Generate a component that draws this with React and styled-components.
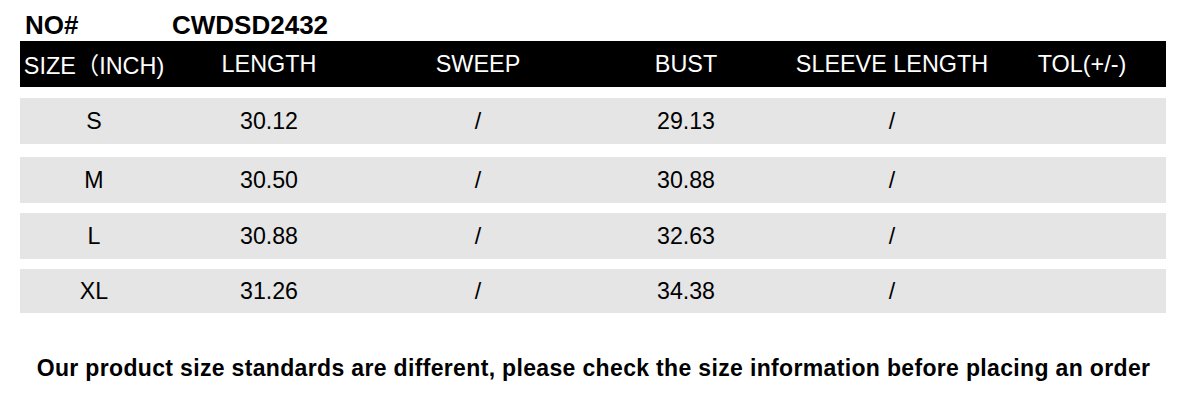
import React from "react";
import styled, { createGlobalStyle } from "styled-components";

const Global = createGlobalStyle`
  html, body { margin: 0; padding: 0; background: #ffffff; }
  body { font-family: "Liberation Sans", Arial, "Noto Sans CJK SC", sans-serif; color: #000; }
`;

const Page = styled.div`
  width: 1192px;
  height: 400px;
  padding: 10px 0 0 20px;
  box-sizing: border-box;
`;

const TitleRow = styled.div`
  display: flex;
  height: 30px;
  line-height: 30px;
  font-size: 26px;
  font-weight: bold;
  padding-left: 5px;
`;

const TitleLabel = styled.span`
  width: 147px;
`;

const COLS = "148px 202px 216px 200px 212px 168px";

const HeaderBar = styled.div`
  display: grid;
  grid-template-columns: ${COLS};
  width: 1146px;
  height: 46px;
  margin-top: 1px;
  background: #000;
  color: #fff;
  font-size: 23.4px;
  align-items: center;
`;

const HeadCell = styled.div`
  text-align: center;
  white-space: nowrap;
  font-family: "Liberation Sans", "Noto Sans CJK SC", sans-serif;
`;

const Row = styled.div`
  display: grid;
  grid-template-columns: ${COLS};
  width: 1146px;
  height: ${(p) => p.$h}px;
  margin-top: ${(p) => p.$gap}px;
  background: #e5e5e5;
  font-size: 23.2px;
  align-items: center;
`;

const Cell = styled.div`
  text-align: center;
  white-space: nowrap;
`;

const Note = styled.div`
  margin: 42px 0 0 -20px;
  width: 1187px;
  height: 26px;
  line-height: 26px;
  text-align: center;
  font-size: 23px;
  letter-spacing: 0.34px;
  font-weight: bold;
  white-space: nowrap;
`;

const headers = ["SIZE\uFF08INCH)", "LENGTH", "SWEEP", "BUST", "SLEEVE LENGTH", "TOL(+/-)"];

const rows = [
  { cells: ["S", "30.12", "/", "29.13", "/", ""], gap: 11, h: 46 },
  { cells: ["M", "30.50", "/", "30.88", "/", ""], gap: 13, h: 46 },
  { cells: ["L", "30.88", "/", "32.63", "/", ""], gap: 10, h: 46 },
  { cells: ["XL", "31.26", "/", "34.38", "/", ""], gap: 10, h: 44 },
];

export default function App() {
  return (
    <>
      <Global />
      <Page>
        <TitleRow>
          <TitleLabel>NO#</TitleLabel>
          <span>CWDSD2432</span>
        </TitleRow>
        <HeaderBar>
          {headers.map((h) => (
            <HeadCell key={h}>{h}</HeadCell>
          ))}
        </HeaderBar>
        {rows.map((r, i) => (
          <Row key={i} $gap={r.gap} $h={r.h}>
            {r.cells.map((c, j) => (
              <Cell key={j}>{c}</Cell>
            ))}
          </Row>
        ))}
        <Note>
          Our product size standards are different, please check the size information before placing an order
        </Note>
      </Page>
    </>
  );
}
